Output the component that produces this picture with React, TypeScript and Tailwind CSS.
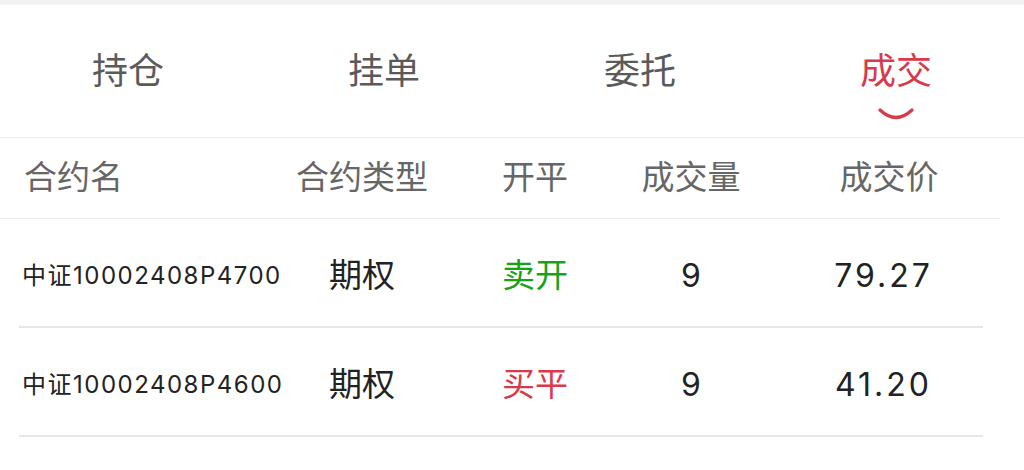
import React from 'react'

const tabs = ['持仓', '挂单', '委托', '成交']
const active = 3

const rows = [
  { name: '中证10002408P4700', type: '期权', side: '卖开', buy: false, qty: '9', price: '79.27' },
  { name: '中证10002408P4600', type: '期权', side: '买平', buy: true, qty: '9', price: '41.20' },
]

const font = { fontFamily: 'Inter, "Noto Sans CJK SC", sans-serif' }

export default function App() {
  return (
    <div className="w-[1024px] h-[470px] bg-white overflow-hidden" style={font}>
      <div className="h-[5px] bg-[#f2f2f2]" />
      <div className="w-[1000px]">
        {/* tabs */}
        <div className="grid grid-cols-4 w-[1024px] h-[133px] border-b border-[#ececec]">
          {tabs.map((t, i) => (
            <div key={t} className="relative flex flex-col items-center pt-[45px]">
              <span className={`text-[36px] leading-[42px] ${i === active ? 'text-[#d83a4a]' : 'text-[#5a5a5a]'}`}>{t}</span>
              {i === active && (
                <svg className="mt-[15px]" width="38" height="14" viewBox="0 0 38 14">
                  <path d="M3 3 Q19 18 35 3" fill="none" stroke="#d83a4a" strokeWidth="3.2" strokeLinecap="round" />
                </svg>
              )}
            </div>
          ))}
        </div>

        {/* header */}
        <div className="grid grid-cols-[276px_172px_174px_138px_1fr] h-[81px] items-center border-b border-[#ececec] text-[33px] text-[#666666]">
          <div className="pl-[24px]">合约名</div>
          <div className="text-center">合约类型</div>
          <div className="text-center">开平</div>
          <div className="text-center">成交量</div>
          <div className="text-center pl-[18px]">成交价</div>
        </div>

        {/* rows */}
        {rows.map(r => (
          <div key={r.name} className="mx-[19px] w-[964px] grid grid-cols-[257px_172px_174px_138px_1fr] h-[109px] pt-[6px] items-center border-b-2 border-[#e6e6e6] text-[#222222]">
            <div className="pl-[3px] text-[24px] tracking-[1.5px] whitespace-nowrap">{r.name}</div>
            <div className="text-center text-[33px]">{r.type}</div>
            <div className={`text-center text-[33px] ${r.buy ? 'text-[#d83a4a]' : 'text-[#16a316]'}`}>{r.side}</div>
            <div className="text-center text-[32px]">{r.qty}</div>
            <div className="text-center text-[32px] tracking-[3px] pl-[24px]">{r.price}</div>
          </div>
        ))}
      </div>
    </div>
  )
}
